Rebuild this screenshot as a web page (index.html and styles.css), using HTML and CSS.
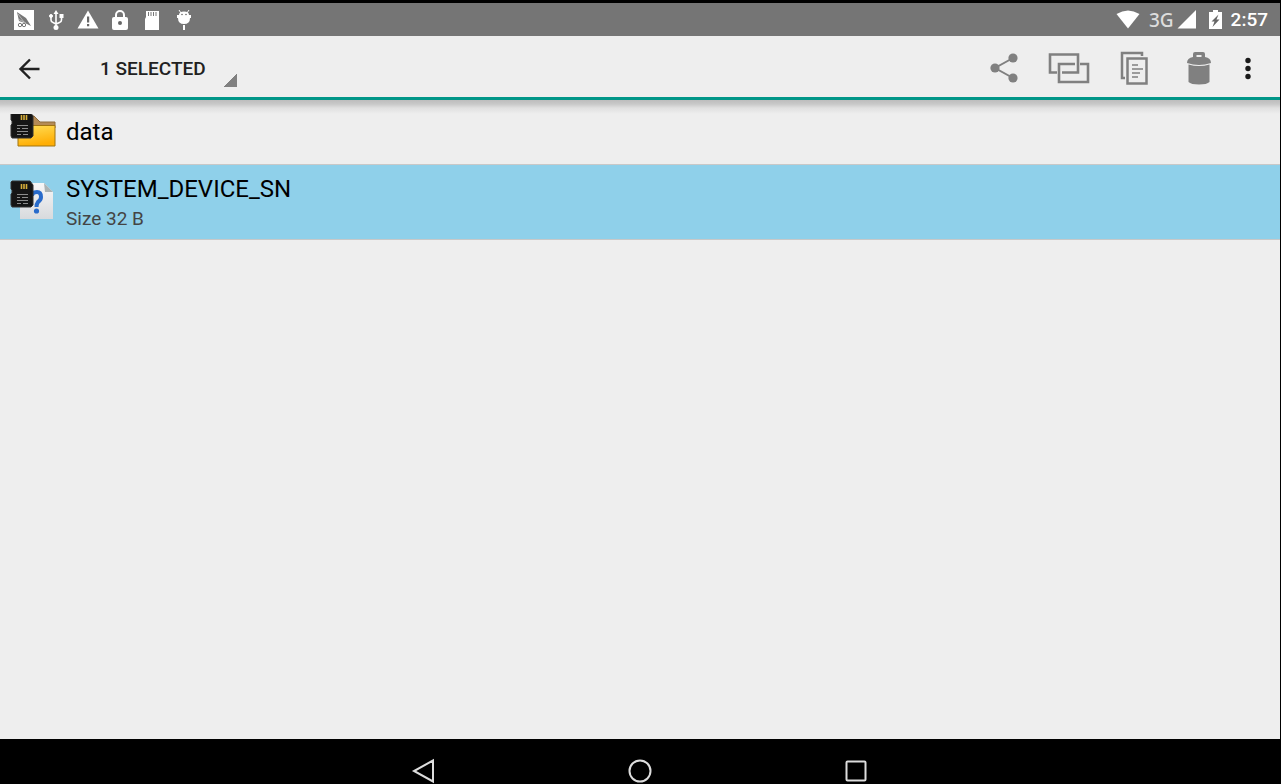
FILE: index.html
```html
<!DOCTYPE html>
<html lang="en">
<head>
    <meta charset="utf-8">
    <title>File manager</title>
    <link rel="stylesheet" href="styles.css">
</head>

<body>
    <div class="status-bar">
        <div class="notifications">
            <!-- app -->
            <svg width="20" height="20" viewBox="0 0 20 20">
                <rect width="20" height="20" fill="#fff"/>
                <path d="M3 2L12 8L17 16L11 13L5 11Z" fill="#777"/>
                <path d="M4 4L10 12M4 9L12 13" stroke="#ccc" stroke-width="0.7"/>
                <circle cx="6" cy="15" r="1.7" fill="none" stroke="#777"/>
                <circle cx="10" cy="15" r="1.7" fill="none" stroke="#777"/>
            </svg>
            <!-- usb -->
            <svg width="20" height="20" viewBox="0 0 20 20" fill="none" stroke="#fff" stroke-width="1.600">
                <path d="M10 3V17M5 6V10Q5 12 7 12.500L10 14M15.500 6V10Q15.500 12 13.500 12.500L10 14"/>
                <path d="M7.500 4L10 0L12.500 4Z" fill="#fff" stroke="none"/>
                <circle cx="5" cy="6" r="1.500" fill="#fff" stroke-width="1"/>
                <rect x="14" y="4.500" width="3" height="3" fill="#fff" stroke-width="1"/>
                <circle cx="10" cy="17.500" r="2.500" fill="#fff" stroke="none"/>
            </svg>
            <!-- warning -->
            <svg width="20" height="20" viewBox="0 0 20 20">
                <path d="M10 0.500L20.500 18.500H-0.500Z" fill="#fff"/>
                <path d="M9 6.500h2.200v6H9zM9 14h2.200v2.200H9z" fill="#666"/>
            </svg>
            <!-- lock -->
            <svg width="20" height="20" viewBox="0 0 20 20">
                <path d="M6 8V5a4 4 0 0 1 8 0V8" fill="none" stroke="#fff" stroke-width="2"/>
                <rect x="2" y="7" width="16" height="13" rx="2" fill="#fff"/>
                <circle cx="10" cy="13" r="2" fill="#666"/>
            </svg>
            <!-- sd card -->
            <svg width="20" height="20" viewBox="0 0 20 20">
                <path d="M4 1H17V20H3V9L4 7Z" fill="#fff"/>
                <path d="M6.500 2V6M9 2V6M11.500 2V6M14 2V6" stroke="#777"/>
            </svg>
            <!-- android -->
            <svg width="20" height="20" viewBox="0 0 20 20">
                <path d="M5 0L7 3M15 0L13 3" stroke="#fff"/>
                <path d="M5 5Q5 1.500 10 1.500Q15 1.500 15 5H17V8H16Q16 14 10 14Q4 14 4 8H3V5Z" fill="#fff"/>
                <rect x="9" y="15" width="2" height="5" fill="#fff"/>
                <circle cx="8" cy="4.500" r="0.800" fill="#666"/>
                <circle cx="12" cy="4.500" r="0.800" fill="#666"/>
            </svg>
        </div>
        <div class="system">
            <svg class="wifi" width="24" height="20" viewBox="0 0 24 20">
                <path d="M0.500 4Q12 -3 23.500 4L12 18.500Z" fill="#fff"/>
            </svg>
            <span class="network">3G</span>
            <svg class="signal" width="18" height="20" viewBox="0 0 18 20">
                <path d="M18 0V18.500H-0.500Z" fill="#fff"/>
            </svg>
            <svg class="battery" width="13" height="20" viewBox="0 0 13 20">
                <path d="M4 0H9V2H13V19H0V2H4Z" fill="#fff"/>
                <path d="M9.500 4.500L2.500 11.500H5.500L3.500 17L10.500 9.500H7.500Z" fill="#666"/>
            </svg>
            <time>2:57</time>
        </div>
    </div>

    <header class="action-bar">
        <button class="back" aria-label="Back">
            <svg width="22" height="22" viewBox="0 0 22 22" fill="none" stroke="#212121" stroke-width="2.400">
                <path d="M20.500 11H1.500M11 1.500L1.500 11L11 20.500"/>
            </svg>
        </button>
        <div class="spinner">
            <select aria-label="Selection">
                <option>1 SELECTED</option>
            </select>
        </div>
        <div class="actions">
            <button aria-label="Share">
                <svg width="28" height="30" viewBox="0 0 28 30">
                    <path d="M23 5L5 15L23 25" fill="none" stroke="#808080" stroke-width="2"/>
                    <circle cx="23" cy="5" r="4.600" fill="#808080"/>
                    <circle cx="5" cy="15" r="4.600" fill="#808080"/>
                    <circle cx="23" cy="25" r="4.600" fill="#808080"/>
                </svg>
            </button>
            <button aria-label="Select all">
                <svg width="42" height="32" viewBox="0 0 42 32" fill="none" stroke="#808080" stroke-width="2.600">
                    <path d="M9 20.500H2V2.500H30V20.500H14"/>
                    <path d="M27 12H11V30H40V12H32"/>
                </svg>
            </button>
            <button aria-label="Copy">
                <svg width="28" height="34" viewBox="0 0 28 34" fill="none" stroke="#808080" stroke-width="2.500">
                    <path d="M22 5V2H2V27H5"/>
                    <rect x="7.500" y="7.500" width="19" height="25"/>
                    <path d="M12 14H18M12 18H23M12 22H20M12 26H18" stroke-width="1.300"/>
                </svg>
            </button>
            <button aria-label="Delete">
                <svg width="24" height="34" viewBox="0 0 24 34" fill="#808080">
                    <path d="M6 6V3Q6 1 8 1H16Q18 1 18 3V6Q24 7 24 12Q18 14 12 14Q6 14 0 12Q0 7 6 6ZM9.500 4V6H14.500V4Z" fill-rule="evenodd"/>
                    <path d="M1.500 13.500Q12 16.500 22.500 13.500V31Q20 33.500 12 33.500Q4 33.500 1.500 31Z"/>
                </svg>
            </button>
            <button aria-label="More options">
                <svg width="6" height="22" viewBox="0 0 6 22" fill="#1a1a1a">
                    <circle cx="3" cy="3.500" r="2.700"/>
                    <circle cx="3" cy="11.500" r="2.700"/>
                    <circle cx="3" cy="19.500" r="2.700"/>
                </svg>
            </button>
        </div>
    </header>

    <!-- memory card badge, drawn over both file icons -->
    <svg class="defs" width="0" height="0">
        <symbol id="card" viewBox="0 0 24 28">
            <path d="M2 1H20L23 5V25L21 27H2L1 25V14L2 13V10L1 9V2Z" fill="#151515" stroke="#333"/>
            <path d="M11.500 4V9M14 4V9M16.500 4V9" stroke="#d5ad3a" stroke-width="1.600"/>
            <path d="M7 14.500H18M7 17.500H10M12 17.500H18M7 20.500H18M7 23.500H11M13 23.500H18" stroke="#8c8c8c"/>
        </symbol>
    </svg>

    <main class="files">
        <ul>
            <li>
                <a class="file" href="#">
                    <svg width="48" height="40" viewBox="0 0 48 40">
                        <defs>
                            <linearGradient id="folder" x2="0.300" y2="1">
                                <stop offset="0" stop-color="#ffe05a"/>
                                <stop offset="1" stop-color="#ffae05"/>
                            </linearGradient>
                        </defs>
                        <path d="M9 6H24L30 12H45V18H9Z" fill="#b58b55" stroke="#8e6c3c"/>
                        <path d="M8 15.500H45V36H8Z" fill="url(#folder)" stroke="#a07410"/>
                        <use href="#card" width="24" height="28" y="1"/>
                    </svg>
                    <span class="name">data</span>
                </a>
            </li>
            <li>
                <a class="file selected" href="#" aria-current="true">
                    <svg width="48" height="40" viewBox="0 0 48 40">
                        <defs>
                            <linearGradient id="paper" x2="0" y2="1">
                                <stop offset="0" stop-color="#f7f7f7"/>
                                <stop offset="1" stop-color="#d8dadd"/>
                            </linearGradient>
                        </defs>
                        <path d="M10 3H34L43 12V39H10Z" fill="url(#paper)"/>
                        <path d="M34 3L43 12H35Z" fill="#aab3b5"/>
                        <path d="M22 16Q22 12 27 12Q31 12 31 17Q31 20 28 22Q26.500 24 26.500 27" fill="none" stroke="#286bcb" stroke-width="4"/>
                        <circle cx="26.500" cy="31" r="2.600" fill="#286bcb"/>
                        <use href="#card" width="24" height="28"/>
                    </svg>
                    <span class="text">
                        <span class="name">SYSTEM_DEVICE_SN</span>
                        <span class="size">Size 32 B</span>
                    </span>
                </a>
            </li>
        </ul>
    </main>

    <nav class="nav-bar">
        <button aria-label="Back">
            <svg width="24" height="26" viewBox="0 0 24 26">
                <path d="M21 2.500V23.500L2 13Z"/>
            </svg>
        </button>
        <button aria-label="Home">
            <svg width="24" height="26" viewBox="0 0 24 26">
                <circle cx="12" cy="13" r="10.500"/>
            </svg>
        </button>
        <button aria-label="Recent apps">
            <svg width="24" height="26" viewBox="0 0 24 26">
                <rect x="2.500" y="3.500" width="19" height="19" rx="1"/>
            </svg>
        </button>
    </nav>
</body>
</html>
```
FILE: styles.css
```css
* {
    box-sizing: border-box;
}

body {
    margin: 0;
    min-height: 100vh;
    display: flex;
    flex-direction: column;
    border-top: 3px solid #000;
    border-right: 1px solid #000;
    background: #eee;
    color: #000;
    font-family: Roboto, sans-serif;
}

svg {
    display: block;
    flex: none;
    overflow: visible;
}

button {
    display: flex;
    align-items: center;
    justify-content: center;
    padding: 0;
    border: none;
    background: none;
    cursor: pointer;
}

/* status bar */
.status-bar {
    display: flex;
    align-items: center;
    justify-content: space-between;
    height: 33px;
    padding: 0 12px 0 14px;
    background: #757575;
    color: #fff;
}

.notifications {
    display: flex;
    gap: 12px;
}

.system {
    display: flex;
    align-items: center;
    font-size: 19px;
    line-height: 24px;
    font-weight: 500;
}

.network {
    margin-left: 9px;
    color: #ddd;
    font-family: "Noto Sans", sans-serif;
    font-weight: 500;
}

.signal {
    margin-left: 4px;
}

.battery {
    margin: 0 9px 0 13px;
}

/* action bar */
.action-bar {
    position: relative;
    display: flex;
    height: 64px;
    border-bottom: 3px solid #009688;
}

.action-bar::after {
    content: "";
    position: absolute;
    top: 64px;
    left: 0;
    right: 0;
    height: 14px;
    background: linear-gradient(#bdbdbd, #c8c8c8 4px, #e0e0e0 8px, #eee);
    pointer-events: none;
}

.back {
    width: 60px;
    padding-top: 4px;
}

.spinner {
    position: relative;
    margin-left: 40px;
}

.spinner select {
    appearance: none;
    height: 100%;
    padding: 4px 31px 0 0;
    border: none;
    outline: none;
    background: none;
    color: #212121;
    font: 500 19px/24px Roboto, sans-serif;
}

.spinner::after {
    content: "";
    position: absolute;
    right: 0;
    bottom: 10px;
    width: 14px;
    height: 14px;
    background: linear-gradient(135deg, transparent 50%, #808080 50%);
    pointer-events: none;
}

.actions {
    display: flex;
    margin-left: auto;
    padding: 2px 15px 0 0;
}

.actions button {
    width: 65px;
}

.actions button:last-child {
    width: 34px;
}

.defs {
    position: absolute;
}

/* file list */
.files {
    flex: 1;
}

.files ul {
    margin: 0;
    padding: 0;
    list-style: none;
}

.file {
    display: flex;
    align-items: center;
    gap: 8px;
    min-height: 65px;
    padding: 2px 10px 6px;
    border-bottom: 1px solid #c8c8c8;
    color: #000;
    text-decoration: none;
}

.file.selected {
    min-height: 75px;
    background: #8fd0ea;
}

.name {
    display: block;
    padding-top: 4px;
    font-size: 24px;
    line-height: 32px;
}

.size {
    display: block;
    color: #444;
    font-size: 19px;
    line-height: 28px;
}

.text {
    padding-top: 2px;
}

/* navigation bar */
.nav-bar {
    display: flex;
    justify-content: center;
    height: 45px;
    padding-top: 19px;
    background: #000;
}

.nav-bar button {
    width: 216px;
    height: 26px;
}

.nav-bar svg {
    fill: none;
    stroke: #ddd;
    stroke-width: 2;
}
```
